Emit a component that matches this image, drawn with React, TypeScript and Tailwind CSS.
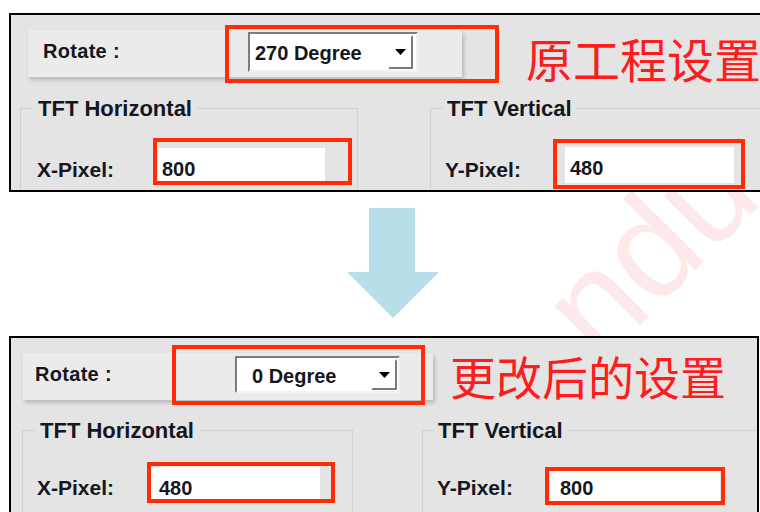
import React from 'react';

const ink = 'text-[#16161e]';

type SelectProps = { value: string; className: string; textClass: string; btnClass: string };

const Select: React.FC<SelectProps> = ({ value, className, textClass, btnClass }) => (
  <div
    className={`flex bg-white border-2 border-t-[#7c7c7c] border-l-[#7c7c7c] border-b-[#f2f2f2] border-r-[#f2f2f2] ${className}`}
  >
    <span className={`flex-1 flex items-center text-[20px] font-bold ${ink} ${textClass}`}>{value}</span>
    <div
      className={`flex items-center justify-center bg-white border-2 border-t-white border-l-white border-b-[#7a7a7a] border-r-[#7a7a7a] ${btnClass}`}
    >
      <svg width="11" height="6" viewBox="0 0 11 6">
        <polygon points="0,0 11,0 5.5,6" fill="#000" />
      </svg>
    </div>
  </div>
);

const RedBox: React.FC<{ className: string }> = ({ className }) => (
  <div className={`absolute border-4 border-[#fe2c07] ${className}`} />
);

const App: React.FC = () => {
  return (
    <div className="w-[760px] h-[512px] overflow-hidden bg-white pt-[13px] font-['Liberation_Sans',Arial,sans-serif]">
      {/* original settings */}
      <div className="relative ml-[9px] w-[770px] h-[179px] overflow-hidden border-2 border-black bg-[#e4e4e4]">
        <div className="mt-[15px] flex h-[47px] items-start">
          <div className="ml-[17px] flex h-[47px] w-[434px] items-start bg-[#ebebeb] pt-[2px] shadow-[2px_3px_4px_rgba(0,0,0,0.18)]">
            <span className={`w-[220px] pl-[15px] text-[20px] leading-[38px] font-bold tracking-[0.3px] ${ink}`}>Rotate :</span>
            <Select
              value="270 Degree"
              className="w-[170px] h-[40px]"
              textClass="pl-[5px] pt-[2px]"
              btnClass="w-[25px] my-[1px] mr-[3px]"
            />
          </div>
          <span className="ml-[64px] mt-[4px] whitespace-nowrap text-[47px] leading-[47px] text-[#ff1c1c] font-['Noto_Sans_CJK_SC',sans-serif]">
            原工程设置
          </span>
        </div>

        <div className="mt-[19px] flex items-start">
          <fieldset className="ml-[9px] h-[110px] w-[338px] shrink-0 border border-[#d0d0d0]">
            <legend className={`ml-[12px] px-[5px] text-[22px] leading-[25px] font-bold ${ink}`}>TFT Horizontal</legend>
            <div className="mt-[27px] flex items-start">
              <span className={`mt-[4px] w-[137px] pl-[16px] text-[21px] leading-[35px] font-bold ${ink}`}>X-Pixel:</span>
              <div className={`flex h-[35px] w-[167px] items-center bg-white pl-[4px] pt-[6px] text-[20px] font-bold ${ink}`}>800</div>
            </div>
          </fieldset>
          <fieldset className="ml-[72px] h-[110px] w-[350px] shrink-0 border border-[#d0d0d0]">
            <legend className={`ml-[12px] px-[4px] text-[22px] leading-[25px] font-bold ${ink}`}>TFT Vertical</legend>
            <div className="mt-[26px] flex items-start">
              <span className={`mt-[5px] w-[130px] pl-[14px] text-[21px] leading-[35px] font-bold ${ink}`}>Y-Pixel:</span>
              <div className={`ml-[4px] flex h-[36px] w-[169px] items-center bg-white pl-[5px] pt-[6px] text-[20px] font-bold ${ink}`}>480</div>
            </div>
          </fieldset>
        </div>

        <RedBox className="left-[214px] top-[10px] w-[274px] h-[58px]" />
        <RedBox className="left-[142px] top-[123px] w-[199px] h-[47px]" />
        <RedBox className="left-[542px] top-[124px] w-[192px] h-[50px]" />
      </div>

      {/* gap with arrow and faint watermark */}
      <div className="relative h-[144px] overflow-hidden">
        <div
          aria-hidden="true"
          className="absolute left-[600px] top-[55px] origin-[0_118px] -rotate-45 whitespace-nowrap text-[140px] leading-[140px] text-[#fde9e9]"
        >
          ndu
        </div>
        <svg className="relative ml-[347px] mt-[16px] block" width="92" height="110" viewBox="0 0 92 110">
          <polygon points="22,0 68,0 68,64 92,64 46,110 0,64 22,64" fill="#b7dde8" />
        </svg>
      </div>

      {/* changed settings */}
      <div className="relative ml-[9px] w-[750px] h-[180px] overflow-hidden border-2 border-black bg-[#e4e4e4]">
        <div className="mt-[15px] flex h-[47px] items-start">
          <div className="ml-[12px] flex h-[47px] w-[410px] items-start bg-[#ebebeb] pt-[3px] shadow-[2px_3px_4px_rgba(0,0,0,0.18)]">
            <span className={`w-[212px] pl-[12px] text-[20px] leading-[37px] font-bold tracking-[0.3px] ${ink}`}>Rotate :</span>
            <Select
              value="0 Degree"
              className="w-[165px] h-[37px]"
              textClass="pl-[15px] pt-[2px]"
              btnClass="w-[26px] my-[1px] mr-[1px]"
            />
          </div>
          <span className="ml-[17px] mt-[-1px] whitespace-nowrap text-[46px] leading-[46px] text-[#ff1c1c] font-['Noto_Sans_CJK_SC',sans-serif]">
            更改后的设置
          </span>
        </div>

        <div className="mt-[18px] flex items-start">
          <fieldset className="ml-[11px] h-[110px] w-[331px] shrink-0 border border-[#d0d0d0]">
            <legend className={`ml-[12px] px-[5px] text-[22px] leading-[25px] font-bold ${ink}`}>TFT Horizontal</legend>
            <div className="mt-[24px] flex items-start">
              <span className={`mt-[3px] w-[127px] pl-[14px] text-[21px] leading-[35px] font-bold ${ink}`}>X-Pixel:</span>
              <div className={`flex h-[35px] w-[170px] items-center bg-white pl-[9px] pt-[6px] text-[20px] font-bold ${ink}`}>480</div>
            </div>
          </fieldset>
          <fieldset className="ml-[69px] h-[110px] w-[340px] shrink-0 border border-[#d0d0d0]">
            <legend className={`ml-[11px] px-[4px] text-[22px] leading-[25px] font-bold ${ink}`}>TFT Vertical</legend>
            <div className="mt-[24px] flex items-start">
              <span className={`mt-[3px] w-[124px] pl-[14px] text-[21px] leading-[35px] font-bold ${ink}`}>Y-Pixel:</span>
              <div className={`ml-[3px] flex h-[35px] w-[170px] items-center bg-white pl-[10px] pt-[6px] text-[20px] font-bold ${ink}`}>800</div>
            </div>
          </fieldset>
        </div>

        <RedBox className="left-[161px] top-[7px] w-[253px] h-[60px]" />
        <RedBox className="left-[136px] top-[124px] w-[188px] h-[41px]" />
        <RedBox className="left-[534px] top-[129px] w-[180px] h-[38px]" />
      </div>
    </div>
  );
};

export default App;
